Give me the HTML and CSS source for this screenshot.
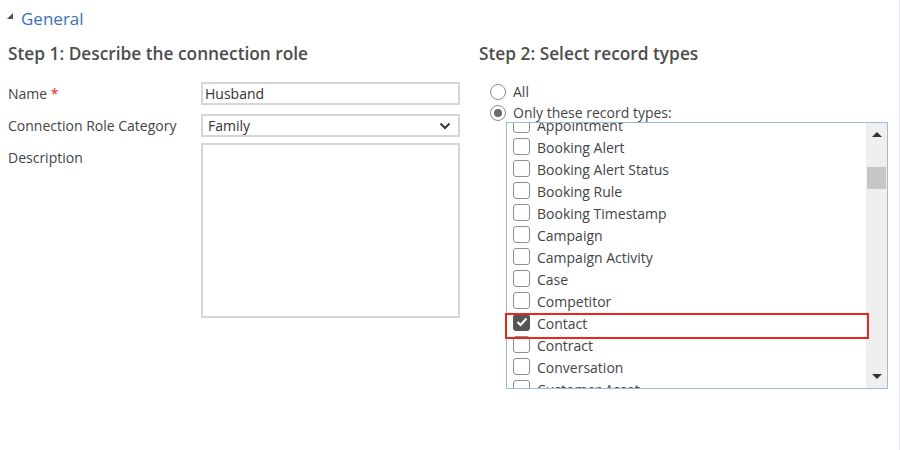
FILE: index.html
```html
<!DOCTYPE html>
<html>
<head>
<meta charset="utf-8">
<link rel="stylesheet" href="styles.css">
</head>
<body>
<div class="page">
  <div class="section-head">
    <span class="collapse-tri"></span>
    <span class="section-title">General</span>
  </div>
  <div class="columns">
    <div class="col-left">
      <h2 class="step">Step 1: Describe the connection role</h2>
      <div class="form-row">
        <div class="label">Name <span class="req">*</span></div>
        <div class="field input">Husband</div>
      </div>
      <div class="form-row">
        <div class="label">Connection Role Category</div>
        <div class="field select">
          <span>Family</span>
          <svg class="chev" width="12" height="8" viewBox="0 0 12 8"><path d="M1.5 1.5 L6 6 L10.5 1.5" fill="none" stroke="#333" stroke-width="2"/></svg>
        </div>
      </div>
      <div class="form-row top">
        <div class="label">Description</div>
        <div class="field textarea"></div>
      </div>
    </div>
    <div class="col-right">
      <h2 class="step">Step 2: Select record types</h2>
      <div class="radio-row"><span class="radio"></span><span>All</span></div>
      <div class="radio-row"><span class="radio on"></span><span>Only these record types:</span></div>
      <div class="listbox">
        <div class="list-view">
          <ul class="list">
            <li><span class="cb"></span>Appointment</li>
            <li><span class="cb"></span>Booking Alert</li>
            <li><span class="cb"></span>Booking Alert Status</li>
            <li><span class="cb"></span>Booking Rule</li>
            <li><span class="cb"></span>Booking Timestamp</li>
            <li><span class="cb"></span>Campaign</li>
            <li><span class="cb"></span>Campaign Activity</li>
            <li><span class="cb"></span>Case</li>
            <li><span class="cb"></span>Competitor</li>
            <li><span class="cb checked"><svg width="12" height="10" viewBox="0 0 12 10"><path d="M1.5 5 L4.5 8 L10.5 1.5" fill="none" stroke="#fff" stroke-width="2.2"/></svg></span>Contact</li>
            <li><span class="cb"></span>Contract</li>
            <li><span class="cb"></span>Conversation</li>
            <li><span class="cb"></span>Customer Asset</li>
          </ul>
        </div>
        <div class="scrollbar">
          <span class="arrow up"></span>
          <div class="track"><div class="thumb"></div></div>
          <span class="arrow down"></span>
        </div>
        <div class="highlight"></div>
      </div>
    </div>
  </div>
</div>
</body>
</html>
```

FILE: styles.css
```css
* { box-sizing: border-box; }
html, body { margin: 0; padding: 0; background: #fff; }
body {
  font-family: "Open Sans", "Noto Sans", sans-serif;
  font-size: 14px;
  color: #444;
  width: 900px;
  height: 450px;
  overflow: hidden;
}
.page {
  padding: 5px 0 0 0;
  border-right: 1px solid #e4e8ec;
  height: 450px;
}
.section-head {
  display: flex;
  align-items: center;
  height: 26px;
  padding-left: 7px;
}
.collapse-tri {
  width: 0; height: 0;
  border-left: 6px solid transparent;
  border-bottom: 6px solid #555;
  margin-right: 8px;
  margin-top: -4px;
}
.section-title {
  font-size: 17px;
  color: #3b6fb6;
}
.columns {
  display: grid;
  grid-template-columns: 452px 382px;
  column-gap: 19px;
  padding-left: 8px;
}
.step {
  margin: 9px 0 0 0;
  font-size: 17.3px;
  font-weight: 600;
  color: #4d4d4d;
  height: 28px;
  line-height: 28px;
  white-space: nowrap;
}
.col-left .step { margin-bottom: 14px; }
.form-row {
  display: flex;
  align-items: center;
  margin-bottom: 9px;
}
.form-row.top { align-items: flex-start; }
.form-row.top .label { padding-top: 2px; }
.label {
  width: 193px;
  flex: none;
}
.req { color: #e0281c; }
.field {
  width: 259px;
  height: 23px;
  border: 2px solid #d6d6d6;
  background: #fff;
  color: #333;
  display: flex;
  align-items: center;
  padding: 0 2px;
}
.select { justify-content: space-between; padding: 0 7px 0 5px; }
.textarea { height: 175px; margin-top: -3px; }
.col-right .step { margin-bottom: 13px; }
.radio-row {
  display: flex;
  align-items: center;
  height: 21px;
  padding-left: 11px;
}
.radio {
  width: 16px; height: 16px;
  border: 1px solid #8a8a8a;
  border-radius: 50%;
  margin-right: 7px;
  display: flex;
  align-items: center;
  justify-content: center;
  background: #fff;
}
.radio.on::after {
  content: "";
  width: 8px; height: 8px;
  border-radius: 50%;
  background: #6a6a6a;
}
.listbox {
  position: relative;
  margin-left: 27px;
  margin-top: -1px;
  width: 382px;
  height: 267px;
  border: 1px solid #9fbbd9;
  display: flex;
  background: #fff;
}
.list-view {
  flex: 1;
  overflow: hidden;
}
.list {
  list-style: none;
  margin: -9px 0 0 0;
  padding: 0;
}
.list li {
  height: 22px;
  display: flex;
  align-items: center;
  padding-left: 6px;
  color: #444;
  white-space: nowrap;
}
.cb {
  width: 17px; height: 17px;
  flex: none;
  border: 1px solid #8f8f8f;
  border-radius: 3px;
  margin-right: 7px;
  margin-top: -2px;
  display: flex;
  align-items: center;
  justify-content: center;
  background: #fff;
}
.cb.checked { background: #555; border-color: #555; }
.scrollbar {
  width: 21px;
  background: #efefef;
  display: flex;
  flex-direction: column;
  align-items: center;
}
.arrow {
  width: 0; height: 0;
  border-left: 5px solid transparent;
  border-right: 5px solid transparent;
  margin: 9px 0;
}
.arrow.up { border-bottom: 5px solid #333; }
.arrow.down { border-top: 5px solid #333; }
.track { flex: 1; width: 100%; padding: 21px 1px 0 1px; }
.thumb { height: 22px; background: #c6c6c6; }
.highlight {
  position: absolute;
  left: -2px;
  top: 190px;
  width: 364px;
  height: 26px;
  border: 2px solid #e8281e;
}
```
